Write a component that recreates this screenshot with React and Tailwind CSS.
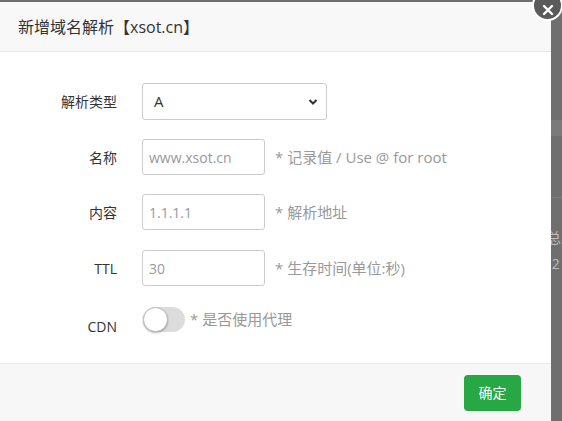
import React, { useState } from "react";

const font = { fontFamily: '"Open Sans", "Noto Sans CJK SC", sans-serif' };

function Row({ label, children, className = "" }) {
    return (
        <div className={"flex items-center " + className}>
            <div className="w-[117px] text-right text-[14px] text-[#333]">{label}</div>
            <div className="ml-[25px] flex items-center">{children}</div>
        </div>
    );
}

function TextInput({ placeholder, hint }) {
    return (
        <>
            <input
                placeholder={placeholder}
                className="w-[123px] h-[36px] border border-[#ccc] rounded-[3px] px-[6px] text-[14px] text-[#555] placeholder-[#999] outline-none"
            />
            <span className="ml-[10px] text-[15px] text-[#999]">{hint}</span>
        </>
    );
}

export default function App() {
    const [cdn, setCdn] = useState(false);

    return (
        <div className="relative w-[562px] h-[421px] overflow-hidden bg-[#6f6f6f] flex" style={font}>
            {/* modal */}
            <div className="w-[551px] mt-[2px] bg-white flex flex-col">
                <div className="h-[50px] bg-[#f8f8f8] border-b border-[#e5e5e5] flex items-center pl-[18px] text-[16px] text-[#333]">
                    新增域名解析【xsot.cn】
                </div>
                <div className="flex-1 pt-[31px]">
                    <Row label="解析类型">
                        <div className="relative w-[185px] h-[37px] border border-[#ccc] rounded-[3px] flex items-center px-[11px] text-[15px] text-[#333]">
                            A
                            <svg className="absolute right-[8px] top-[14px]" width="10" height="8" viewBox="0 0 10 8">
                                <path d="M1.5 2 L5 5.5 L8.5 2" stroke="#333" strokeWidth="2" fill="none" />
                            </svg>
                        </div>
                    </Row>
                    <Row label="名称" className="mt-[19px]">
                        <TextInput placeholder="www.xsot.cn" hint="* 记录值 / Use @ for root" />
                    </Row>
                    <Row label="内容" className="mt-[19px]">
                        <TextInput placeholder="1.1.1.1" hint="* 解析地址" />
                    </Row>
                    <Row label="TTL" className="mt-[20px]">
                        <TextInput placeholder="30" hint="* 生存时间(单位:秒)" />
                    </Row>
                    <div className="flex items-start mt-[21px]">
                        <div className="w-[117px] text-right text-[14px] text-[#333] pt-[9px]">CDN</div>
                        <div className="ml-[26px] flex items-center">
                            <button
                                onClick={() => setCdn(!cdn)}
                                className={"relative w-[42px] h-[25px] rounded-full " + (cdn ? "bg-[#28a745]" : "bg-[#dcdcdc]")}
                            >
                                <span
                                    className={"absolute top-0 w-[25px] h-[25px] rounded-full bg-white border border-[#bbb] shadow-[0_1px_2px_rgba(0,0,0,0.3)] " + (cdn ? "left-[17px]" : "left-0")}
                                />
                            </button>
                            <span className="ml-[5px] text-[15px] text-[#999]">* 是否使用代理</span>
                        </div>
                    </div>
                </div>
                <div className="h-[58px] bg-[#f7f7f7] border-t border-[#ececec] flex items-center justify-end pr-[30px]">
                    <button className="w-[57px] h-[36px] rounded-[4px] bg-[#28a745] text-white text-[14px]">确定</button>
                </div>
            </div>

            {/* backdrop strip */}
            <div className="flex-1 flex flex-col text-[14px] text-[#bdbdbd] overflow-hidden">
                <div className="h-[120px]" />
                <div className="h-[16px] bg-[#7a7a7a]" />
                <div className="h-[61px]" />
                <div className="h-px bg-[#7c7c7c]" />
                <div className="pt-[33px] -ml-[4px] leading-none">总</div>
                <div className="pt-[12px] -ml-[3px] leading-none">.2</div>
            </div>

            {/* close */}
            <div className="absolute left-[532px] top-[-10px] w-[31px] h-[31px] rounded-full bg-[#5a5a5a] border-[2px] border-white flex items-center justify-center">
                <svg width="12" height="12" viewBox="0 0 12 12" className="mt-[8px]">
                    <path d="M2 2 L10 10 M10 2 L2 10" stroke="white" strokeWidth="2.4" strokeLinecap="round" />
                </svg>
            </div>
        </div>
    );
}
